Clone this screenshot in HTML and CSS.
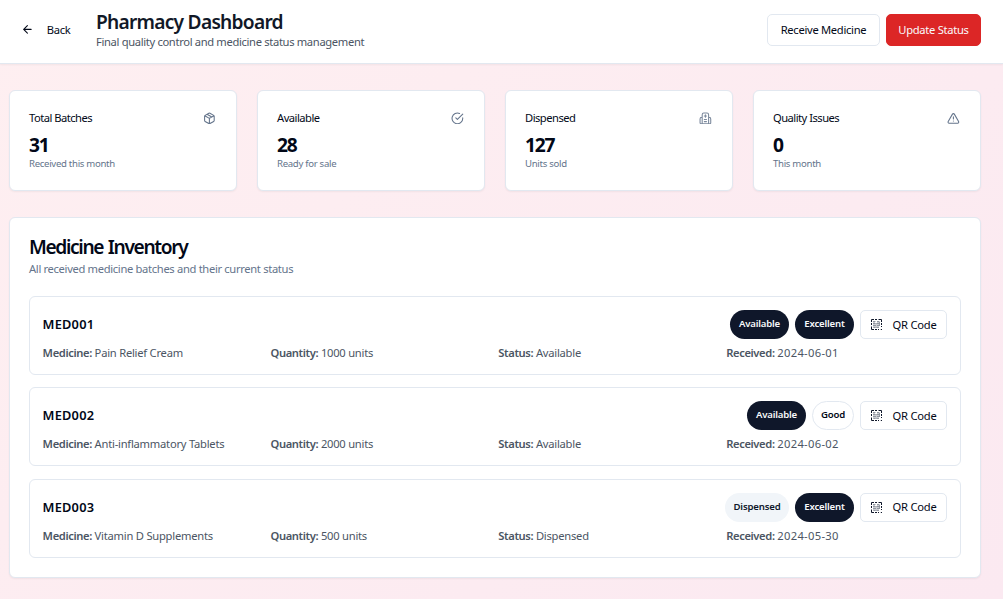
FILE: index.html
```html
<!DOCTYPE html>
<html lang="en">
<head>
<meta charset="utf-8">
<title>Pharmacy Dashboard</title>
<link rel="stylesheet" href="styles.css">
</head>
<body>
<svg class="sprite" aria-hidden="true">
  <symbol id="qr" viewBox="0 0 11 11"><path class="qr-soft" d="M2 2.5h2.5M6 2.5h2.5M2 4.5h2.5M5.5 4.5h3.5M2 6.5h3M6 6.5h3M2.5 8.5h2M5.5 8.5h2.5M3 2v7M7 2v6M5 4v5M8.5 3v4"/><path d="M.5 3V.5H3M4 .5h2M7.5 .5h3V3M.5 4v2M.5 7.5v3H3M4 10.5h2M7 10.5h1M9.8 10.5h1.2M10.5 4v2M10.5 7v1"/></symbol>
</svg>
<header class="header">
  <button class="back"><svg class="icon" viewBox="0 0 24 24"><path d="m12 19-7-7 7-7M19 12H5"/></svg><span class="back-text">Back</span></button>
  <div class="heading">
    <h1 class="title">Pharmacy Dashboard</h1>
    <p class="subtitle">Final quality control and medicine status management</p>
  </div>
  <div class="actions">
    <button class="btn receive">Receive Medicine</button>
    <button class="btn update">Update Status</button>
  </div>
</header>
<main class="main">
  <section class="stats">
    <article class="card stat">
      <div class="stat-head"><h3 class="stat-label">Total Batches</h3><svg class="icon muted" viewBox="0 0 24 24"><path d="m7.5 4.27 9 5.15M21 8a2 2 0 0 0-1-1.73l-7-4a2 2 0 0 0-2 0l-7 4A2 2 0 0 0 3 8v8a2 2 0 0 0 1 1.73l7 4a2 2 0 0 0 2 0l7-4A2 2 0 0 0 21 16ZM3.3 7l8.7 5 8.7-5M12 22V12"/></svg></div>
      <div class="stat-value">31</div><p class="stat-note">Received this month</p>
    </article>
    <article class="card stat">
      <div class="stat-head"><h3 class="stat-label">Available</h3><svg class="icon muted" viewBox="0 0 24 24"><path d="M22 11.08V12a10 10 0 1 1-5.93-9.14M9 11l3 3L22 4"/></svg></div>
      <div class="stat-value">28</div><p class="stat-note">Ready for sale</p>
    </article>
    <article class="card stat">
      <div class="stat-head"><h3 class="stat-label">Dispensed</h3><svg class="icon muted soft" viewBox="0 0 24 24"><path d="M6 22V5a3 3 0 0 1 3-3h6a3 3 0 0 1 3 3v17ZM6 10H5a3 3 0 0 0-3 3v7a2 2 0 0 0 2 2h2M18 10h1a3 3 0 0 1 3 3v7a2 2 0 0 1-2 2h-2M12 5v5M10 7.5h4M10 14h4M10 18h4M6 22h12"/></svg></div>
      <div class="stat-value">127</div><p class="stat-note">Units sold</p>
    </article>
    <article class="card stat">
      <div class="stat-head"><h3 class="stat-label">Quality Issues</h3><svg class="icon muted" viewBox="0 0 24 24"><path d="m21.73 18-8-14a2 2 0 0 0-3.48 0l-8 14A2 2 0 0 0 4 21h16a2 2 0 0 0 1.73-3ZM12 9v4M12 17h.01"/></svg></div>
      <div class="stat-value">0</div><p class="stat-note">This month</p>
    </article>
  </section>
  <section class="card inventory">
    <h2 class="inv-title">Medicine Inventory</h2>
    <p class="inv-sub">All received medicine batches and their current status</p>
    <div class="list">
      <article class="row">
        <div class="row-head"><h3 class="code">MED001</h3><div class="tags"><span class="badge dark">Available</span><span class="badge dark">Excellent</span><button class="btn qr"><svg class="qr-icon"><use href="#qr"/></svg>QR Code</button></div></div>
        <div class="details"><p><b>Medicine:</b> Pain Relief Cream</p><p><b>Quantity:</b> 1000 units</p><p><b>Status:</b> Available</p><p><b>Received:</b> <span class="date">2024-06-01</span></p></div>
      </article>
      <article class="row">
        <div class="row-head"><h3 class="code">MED002</h3><div class="tags"><span class="badge dark">Available</span><span class="badge outline">Good</span><button class="btn qr"><svg class="qr-icon"><use href="#qr"/></svg>QR Code</button></div></div>
        <div class="details"><p><b>Medicine:</b> Anti-inflammatory Tablets</p><p><b>Quantity:</b> 2000 units</p><p><b>Status:</b> Available</p><p><b>Received:</b> <span class="date">2024-06-02</span></p></div>
      </article>
      <article class="row">
        <div class="row-head"><h3 class="code">MED003</h3><div class="tags"><span class="badge light">Dispensed</span><span class="badge dark">Excellent</span><button class="btn qr"><svg class="qr-icon"><use href="#qr"/></svg>QR Code</button></div></div>
        <div class="details"><p><b>Medicine:</b> Vitamin D Supplements</p><p><b>Quantity:</b> 500 units</p><p><b>Status:</b> Dispensed</p><p><b>Received:</b> <span class="date">2024-05-30</span></p></div>
      </article>
    </div>
  </section>
</main>
</body>
</html>
```
FILE: styles.css
```css
* { box-sizing: border-box; margin: 0; }
body {
  height: 599px;
  overflow: hidden;
  font: 400 11.2px/16px "Noto Sans", sans-serif;
  color: #020817;
  background: linear-gradient(135deg, #feeff1, #fbe9f1);
}
button { font: inherit; color: inherit; background: none; border: 0; padding: 0; white-space: nowrap; }
.sprite { position: absolute; width: 0; height: 0; }
.icon { width: 12.8px; height: 12.8px; fill: none; stroke: currentColor; stroke-width: 2; stroke-linecap: round; stroke-linejoin: round; flex: none; }
.qr-icon { width: 11px; height: 11px; fill: none; stroke: #0f172a; stroke-width: 1; flex: none; }
.qr-soft { stroke: #8a909b; stroke-width: .9; }
.muted { color: #64748b; margin-right: .8px; }
.soft { opacity: .85; }
.header {
  display: flex;
  align-items: center;
  height: 64px;
  padding: 0 22px 4px 21px;
  background: #fff;
  border-bottom: 1px solid #e2e8f0;
  box-shadow: 0 1px 2px rgba(0, 0, 0, .05);
}
.back { display: flex; align-items: center; gap: 13px; width: 75px; letter-spacing: -.3px; }
.heading { white-space: nowrap; }
.title { font-size: 19.2px; line-height: 25px; font-weight: 600; color: #111827; letter-spacing: -.75px; }
.subtitle { color: #4b5563; line-height: 16px; letter-spacing: -.34px; }
.actions { display: flex; gap: 6px; margin-left: auto; }
.btn { display: flex; align-items: center; justify-content: center; height: 32px; border: 1px solid #e2e8f0; border-radius: 5px; background: #fff; letter-spacing: -.3px; }
.receive { width: 113px; }
.update { width: 95px; border-color: #dc2626; background: #dc2626; color: #f8fafc; }
.main { padding: 26px 22px 0 9px; }
.card { background: #fff; border: 1px solid #e2e8f0; border-radius: 6px; box-shadow: 0 1px 2px rgba(0, 0, 0, .05); }
.stats { display: grid; grid-template-columns: repeat(4, 228px); gap: 20px; }
.stat { height: 101px; padding: 19px; }
.stat-head { display: flex; align-items: center; justify-content: space-between; height: 16px; }
.stat-label { font-size: 11.2px; font-weight: 400; letter-spacing: -.52px; }
.stat-value { font-size: 19.2px; line-height: 25px; font-weight: 700; margin-top: 6px; letter-spacing: -1.2px; }
.stat-note { font-size: 9.6px; line-height: 13px; color: #64748b; letter-spacing: -.3px; }
.inventory { height: 361px; margin-top: 26px; padding: 19px; }
.inv-title { font-size: 19.2px; line-height: 20px; font-weight: 600; letter-spacing: -1.36px; word-spacing: 1px; }
.inv-sub { margin-top: 4px; color: #64748b; letter-spacing: -.33px; }
.list { display: flex; flex-direction: column; gap: 12.8px; margin-top: 19px; }
.row { height: 78.6px; padding: 13px; border: 1px solid #e2e8f0; border-radius: 6px; }
.row:last-child { margin-top: .3px; }
.row-head { display: flex; align-items: center; justify-content: space-between; height: 29px; }
.code { font-size: 12.8px; font-weight: 600; padding-bottom: 2px; margin-left: -.4px; letter-spacing: .2px; }
.tags { display: flex; gap: 6px; }
.badge { display: flex; align-items: center; justify-content: center; width: 59px; height: 29px; padding-bottom: 2px; border-radius: 15px; font-size: 9.6px; font-weight: 600; letter-spacing: -.18px; }
.dark { background: #0f172a; color: #f8fafc; }
.outline { width: 42px; border: 1px solid #e2e8f0; }
.light { width: 64px; background: #f1f5f9; color: #0f172a; }
.qr { width: 87px; height: 29px; gap: 10px; padding: 0 0 0 1px; letter-spacing: -.2px; }
.row:last-child .qr { padding-bottom: 1px; }
.details { display: grid; grid-template-columns: repeat(4, 1fr); gap: 7px; margin: 5.6px 0 0 -.4px; color: #4b5563; letter-spacing: -.24px; white-space: nowrap; }
.details b { font-weight: 600; letter-spacing: -.37px; }
.date { letter-spacing: .3px; }
```
